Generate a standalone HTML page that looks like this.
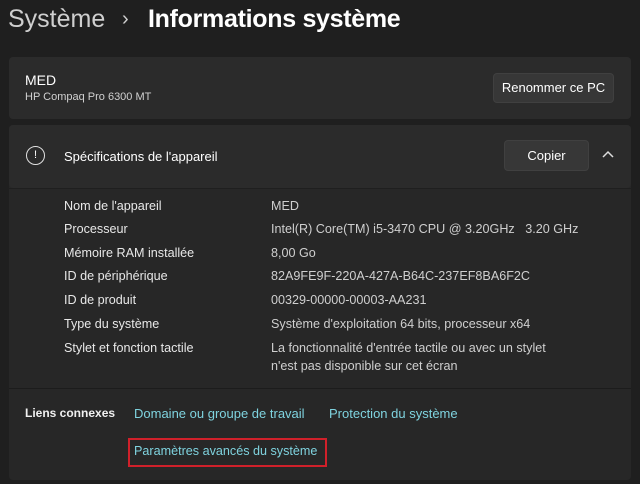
<!DOCTYPE html>
<html><head><meta charset="utf-8"><style>
*{margin:0;padding:0;box-sizing:border-box}
body{width:640px;height:484px;background:#1f1f1f;font-family:"Liberation Sans",sans-serif;color:#fff;position:relative;overflow:hidden;font-size:12.6px}
.a{position:absolute;white-space:nowrap}
.card{position:absolute;left:9px;width:622px;background:#2b2b2b;border-radius:4px}
.btn{position:absolute;background:#373737;border:1px solid #404040;border-radius:4px;text-align:center;font-size:13px}
.l{left:64px;color:#e8e8e8}.v{left:271px;color:#cfcfcf}
.lk{color:#7fd3df;font-size:13px}
</style></head><body>
<div class="a" style="left:8px;top:5px;font-size:25px;color:#cfcfcf">Système</div>
<div class="a" style="left:122px;top:8px;font-size:20px;color:#cfcfcf">›</div>
<div class="a" style="left:148px;top:5px;font-size:25px;font-weight:bold;letter-spacing:-0.3px">Informations système</div>

<div class="card" style="top:57px;height:62px"></div>
<div class="a" style="left:25px;top:72px;font-size:14px">MED</div>
<div class="a" style="left:25px;top:91px;font-size:11px;color:#d0d0d0">HP Compaq Pro 6300 MT</div>
<div class="btn" style="left:493px;top:73px;width:121px;height:30px;line-height:28px">Renommer ce PC</div>

<div class="card" style="top:125px;height:355px;background:#272727"></div>
<div class="card" style="top:125px;height:63px"></div>
<div class="a" style="left:26px;top:146px;width:19px;height:19px;border:1.5px solid #e0e0e0;border-radius:50%;font-size:11px;text-align:center;line-height:16px">!</div>
<div class="a" style="left:64px;top:149px;font-size:13px">Spécifications de l'appareil</div>
<div class="btn" style="left:504px;top:140px;width:85px;height:31px;line-height:29px">Copier</div>
<svg class="a" style="left:602px;top:150px" width="12" height="10"><path d="M1 7 L6 2 L11 7" stroke="#ddd" stroke-width="1.5" fill="none"/></svg>
<div class="a" style="left:9px;top:188px;width:622px;height:1px;background:#1f1f1f"></div>

<div class="a l" style="top:199px">Nom de l'appareil</div><div class="a v" style="top:199px">MED</div>
<div class="a l" style="top:222px">Processeur</div><div class="a v" style="top:222px">Intel(R) Core(TM) i5-3470 CPU @ 3.20GHz&nbsp;&nbsp;&nbsp;3.20 GHz</div>
<div class="a l" style="top:246px">Mémoire RAM installée</div><div class="a v" style="top:246px">8,00 Go</div>
<div class="a l" style="top:269px">ID de périphérique</div><div class="a v" style="top:269px">82A9FE9F-220A-427A-B64C-237EF8BA6F2C</div>
<div class="a l" style="top:293px">ID de produit</div><div class="a v" style="top:293px">00329-00000-00003-AA231</div>
<div class="a l" style="top:317px">Type du système</div><div class="a v" style="top:317px">Système d'exploitation 64 bits, processeur x64</div>
<div class="a l" style="top:341px">Stylet et fonction tactile</div><div class="a v" style="top:341px">La fonctionnalité d'entrée tactile ou avec un stylet</div>
<div class="a v" style="top:359px">n'est pas disponible sur cet écran</div>
<div class="a" style="left:9px;top:388px;width:622px;height:1px;background:#1c1c1c"></div>

<div class="a" style="left:25px;top:406px;font-size:12px;font-weight:bold;color:#f0f0f0">Liens connexes</div>
<div class="a lk" style="left:134px;top:406px">Domaine ou groupe de travail</div>
<div class="a lk" style="left:329px;top:406px">Protection du système</div>
<div class="a" style="left:128px;top:438px;width:199px;height:29px;border:2px solid #d0202a"></div>
<div class="a lk" style="left:134px;top:444px;font-size:12.6px">Paramètres avancés du système</div>
</body></html>
